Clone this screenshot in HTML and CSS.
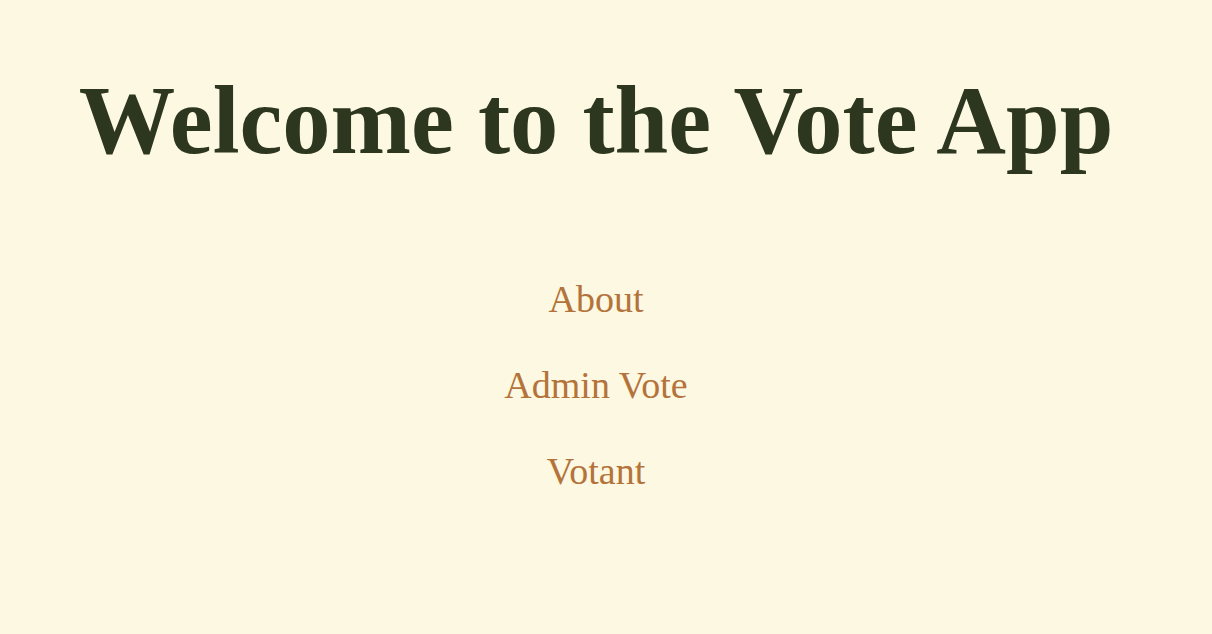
FILE: index.html
```html
<!DOCTYPE html>
<html>
<head>
<meta charset="utf-8">
<link rel="stylesheet" href="styles.css">
</head>
<body>
<div class="app">
  <h1 class="title">Welcome to the Vote App</h1>
  <nav class="links">
    <a class="link" href="#">About</a>
    <a class="link" href="#">Admin Vote</a>
    <a class="link" href="#">Votant</a>
  </nav>
</div>
</body>
</html>
```
FILE: styles.css
```css
html, body {
  margin: 0;
  padding: 0;
  background: #fdf8e1;
  height: 100%;
}
.app {
  font-family: "Liberation Serif", "Times New Roman", serif;
  text-align: center;
  padding: 0 20px 0 0;
}
.title {
  margin: 0;
  padding-top: 66px;
  font-size: 96.5px;
  font-weight: bold;
  color: #2d361e;
  line-height: 110px;
}
.links {
  display: flex;
  flex-direction: column;
  align-items: center;
  gap: 40px;
  margin-top: 100px;
}
.link {
  font-size: 38px;
  color: #b3733a;
  text-decoration: none;
  line-height: 46px;
}
```
